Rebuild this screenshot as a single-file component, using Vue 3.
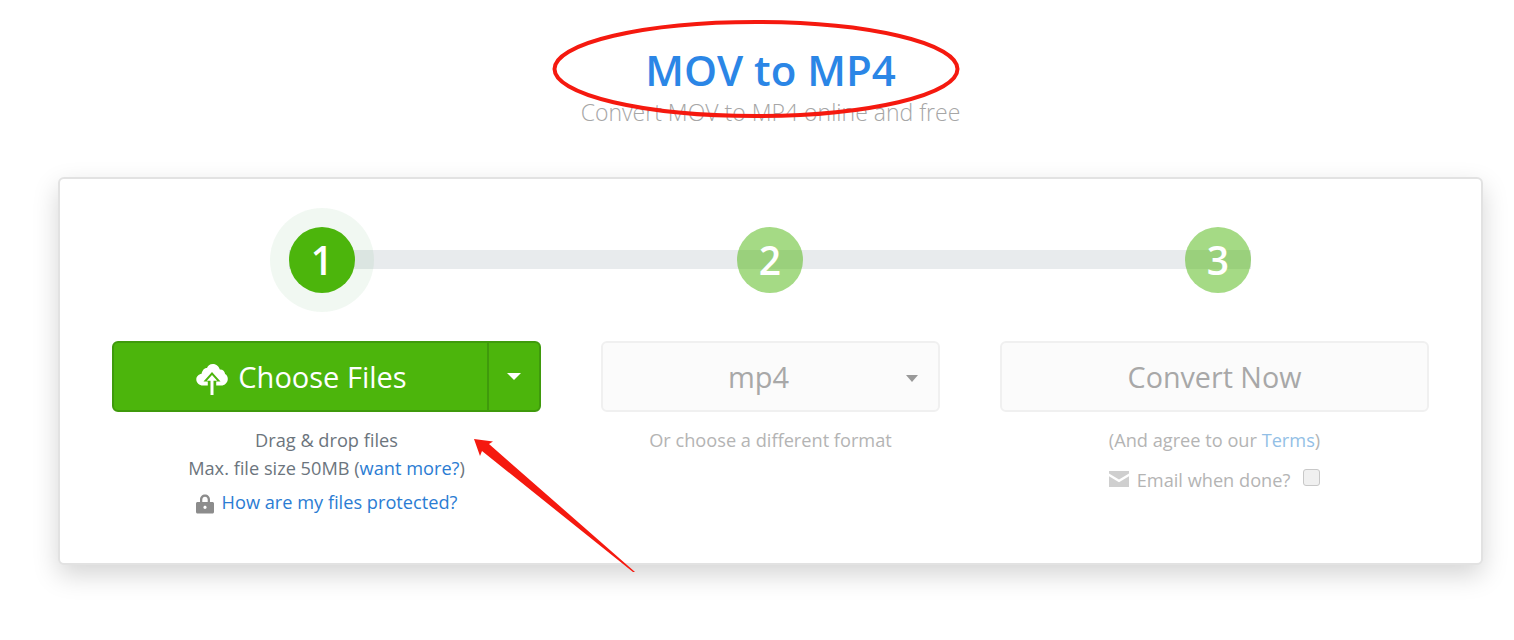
<script setup>
const steps = [1, 2, 3]
</script>

<template>
  <div class="page">
    <h1 class="title">MOV to MP4</h1>
    <p class="subtitle">Convert MOV to MP4 online and free</p>

    <section class="card">
      <div class="steps">
        <div v-for="n in steps" :key="n" class="step" :class="{ active: n === 1 }">{{ n }}</div>
      </div>

      <div class="columns">
        <div class="col">
          <div class="choose">
            <div class="choose-main">
              <svg class="cloud" viewBox="0 0 32 32" aria-hidden="true">
                <path fill="#fff" d="M7 22.500C3.200 22.500 .3 19.800.3 16.500c0-3 2.300-5.300 5.300-5.700C6.300 6.700 8.800 5 11 5c.7-2 2.700-4 5.800-4 3.700 0 6.300 2.500 7 5.500 3-.2 5 2 5.300 4.500 1.700.8 2.700 2.700 2.700 4.700 0 3.800-3 6.800-6.700 6.800z"/>
                <path fill="#4cb50c" d="M16 9 7.500 18.500h4.300v5h8.400v-5h4.300z"/>
                <path fill="#fff" d="M16 12 10.800 17.800h3.700V32h3V17.800h3.700z"/>
              </svg>
              <span>Choose Files</span>
            </div>
            <div class="choose-caret"><i class="tri white"></i></div>
          </div>
          <p class="note first">Drag &amp; drop files</p>
          <p class="note">Max. file size 50MB (<a class="link">want more?</a>)</p>
          <p class="note protect">
            <svg class="lock" viewBox="0 0 18 20" aria-hidden="true">
              <path fill="#8c8c8c" fill-rule="evenodd" d="M4 8V5.500C4 2.600 6.200.5 9 .5s5 2.100 5 5V8h2.500c.8 0 1.500.7 1.500 1.500V18c0 .8-.7 1.500-1.500 1.500h-15C.7 19.500 0 18.800 0 18V9.500C0 8.700.7 8 1.500 8zm2.300 0h5.400V5.500c0-1.600-1.200-2.800-2.700-2.800S6.300 3.900 6.300 5.500zM9 11.800c-.9 0-1.600.7-1.600 1.500 0 .9.700 1.600 1.600 1.600s1.600-.7 1.600-1.600c0-.8-.7-1.500-1.600-1.500z"/>
            </svg>
            <a class="link">How are my files protected?</a>
          </p>
        </div>

        <div class="col faded">
          <div class="ghost select">
            <span>mp4</span>
            <i class="tri grey"></i>
          </div>
          <p class="note first">Or choose a different format</p>
        </div>

        <div class="col faded">
          <div class="ghost convert">Convert Now</div>
          <p class="note first">(And agree to our <a class="link">Terms</a>)</p>
          <div class="email">
            <svg class="mail" viewBox="0 0 20 16" aria-hidden="true">
              <path fill="#cfcfcf" d="M0 0h20v2.600l-10 6-10-6zM0 5.200l10 6 10-6V16H0z"/>
            </svg>
            <span class="email-label">Email when done?</span>
            <span class="check"></span>
          </div>
        </div>
      </div>
    </section>

    <svg class="markup" viewBox="0 0 1514 640" aria-hidden="true">
      <ellipse cx="756" cy="69" rx="201.500" ry="47" fill="none" stroke="#f5190f" stroke-width="4"/>
      <polygon fill="#f5190f" points="474,439 493,441.500 489,444 635,572 633,572 482,451 480,456"/>
    </svg>
  </div>
</template>

<style scoped>
.page {
  position: relative;
  box-sizing: border-box;
  width: 1514px;
  height: 640px;
  padding: 42px 31px 0 58px;
  overflow: hidden;
  font-family: "Open Sans", "Noto Sans", sans-serif;
  background: #fff;
}
.title {
  margin: 0;
  height: 56px;
  line-height: 56px;
  font-size: 42px;
  font-weight: 600;
  color: #2b86e6;
  text-align: center;
}
.subtitle {
  margin: 0 0 49px;
  height: 30px;
  line-height: 28px;
  font-size: 23px;
  font-weight: 300;
  color: #a6a6a6;
  text-align: center;
}
.card {
  box-sizing: border-box;
  height: 388px;
  padding: 48px 52px 0;
  border: 2px solid #e2e2e2;
  border-radius: 6px;
  background: #fff;
  box-shadow: 0 10px 26px rgba(0, 0, 0, 0.17);
}
.steps {
  display: flex;
  justify-content: space-between;
  margin: 0 178px 48px 177px;
  background: linear-gradient(#e8ebed, #e8ebed) left 0 top 23px / 100% 19px no-repeat;
}
.step {
  width: 66px;
  height: 66px;
  line-height: 66px;
  border-radius: 50%;
  background: rgba(76, 181, 12, 0.5);
  color: #fff;
  font-size: 39px;
  font-weight: 600;
  text-align: center;
}
.step.active {
  background: #4cb50c;
  box-shadow: 0 0 0 19px rgba(60, 150, 70, 0.07);
}
.columns {
  display: grid;
  grid-template-columns: 429px 339px 429px;
  gap: 60px;
}
.col {
  text-align: center;
}
.choose {
  display: flex;
  box-sizing: border-box;
  height: 71px;
  border: 2px solid #3f9a0c;
  border-radius: 6px;
  background: #4cb50c;
  color: #fff;
  font-size: 29px;
}
.choose-main {
  flex: 1;
  display: flex;
  align-items: center;
  justify-content: center;
  gap: 10px;
  padding-left: 2px;
}
.cloud {
  width: 32px;
  height: 32px;
  margin-top: 4px;
}
.choose-caret {
  width: 50px;
  display: flex;
  align-items: center;
  justify-content: center;
  border-left: 2px solid #3f9a0c;
}
.tri {
  display: block;
  width: 0;
  height: 0;
  border-left: 7px solid transparent;
  border-right: 7px solid transparent;
  border-top: 7px solid #fff;
}
.tri.grey {
  position: absolute;
  right: 20px;
  top: 32px;
  border-left-width: 6px;
  border-right-width: 6px;
  border-top-color: #999;
}
.ghost {
  position: relative;
  box-sizing: border-box;
  height: 71px;
  line-height: 67px;
  border: 2px solid #f0f0f0;
  border-radius: 6px;
  background: #fbfbfb;
  color: #a8a8a8;
  font-size: 29px;
}
.select {
  padding-right: 24px;
}
.convert {
  font-size: 28.700px;
}
.note {
  margin: 0;
  height: 28px;
  line-height: 28px;
  font-size: 18.200px;
  color: #6c757d;
}
.note.first {
  margin-top: 14px;
}
.note.protect {
  margin-top: 6px;
  display: flex;
  align-items: center;
  justify-content: center;
  gap: 8px;
}
.link {
  color: #2b7cd3;
}
.lock {
  width: 18px;
  height: 20px;
  margin-top: 4px;
}
.faded .note {
  color: #b4b4b4;
}
.faded .link {
  color: #93bfe6;
}
.email {
  display: flex;
  align-items: center;
  justify-content: center;
  gap: 8px;
  height: 28px;
  margin-top: 11px;
  font-size: 18.200px;
  color: #b4b4b4;
}
.email-label {
  margin-top: 2px;
}
.mail {
  width: 20px;
  height: 16px;
}
.check {
  box-sizing: border-box;
  width: 17px;
  height: 17px;
  margin: -4px 0 0 5px;
  border: 1px solid #c8c8c8;
  border-radius: 3px;
  background: #f0f0f0;
}
.markup {
  position: absolute;
  left: 0;
  top: 0;
  width: 1514px;
  height: 640px;
  pointer-events: none;
}
</style>
